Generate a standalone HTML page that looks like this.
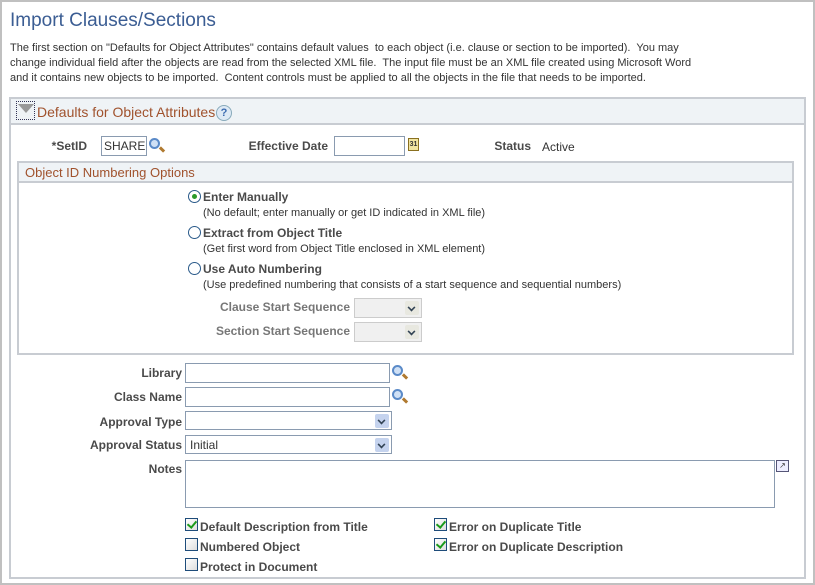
<!DOCTYPE html>
<html><head><style>
*{margin:0;padding:0;box-sizing:border-box}
body{width:815px;height:585px;overflow:hidden;background:#fff;font-family:"Liberation Sans",Arial,sans-serif;position:relative;color:#333}
.a{position:absolute;white-space:nowrap}
.lbl{font-size:12px;font-weight:bold;color:#4a4a4a;text-align:right}
.inp{position:absolute;border:1px solid #8a9bb0;background:#fff;height:20px;font-size:12px;padding:2px 4px;color:#333}
.sel .dd{position:absolute;right:2px;top:2px;width:14px;height:14px;background:#c5d3ee;border-radius:2px}
.sel .dd:after{content:"";position:absolute;left:3px;top:3px;width:5px;height:5px;border-right:2px solid #345;border-bottom:2px solid #345;transform:rotate(45deg) scale(.8)}
.cb{position:absolute;width:13px;height:13px;border:1px solid #1e4c7a;background:linear-gradient(135deg,#fff,#ddd)}
.cb.on:after{content:"";position:absolute;left:3px;top:0px;width:4px;height:7px;border-right:2px solid #1a9a1a;border-bottom:2px solid #1a9a1a;transform:rotate(40deg)}
.rd{position:absolute;width:13px;height:13px;border:1px solid #2a5a8a;border-radius:50%;background:#fff}
.rd.on:after{content:"";position:absolute;left:3px;top:3px;width:5px;height:5px;border-radius:50%;background:#2a9a2a}
.cbl{font-size:12px;font-weight:bold;color:#4a4a4a}
.mag{position:absolute;width:11px;height:11px;border:2px solid #5a8ac8;border-radius:50%;background:#cfe0f5}
.mag:after{content:"";position:absolute;left:8px;top:8px;width:6px;height:3px;background:#b07a30;transform:rotate(45deg)}
</style></head><body>
<div style="position:absolute;left:0;top:0;width:815px;height:585px;border:2px solid #c0c0c0;border-right-width:2px"></div>
<div class="a" style="left:10px;top:10px;font-size:19px;color:#3b5d93">Import Clauses/Sections</div>
<div class="a" style="left:10px;top:41px;font-size:11px;line-height:15px;color:#333">The first section on "Defaults for Object Attributes" contains default values&nbsp; to each object (i.e. clause or section to be imported).&nbsp; You may<br>change individual field after the objects are read from the selected XML file.&nbsp; The input file must be an XML file created using Microsoft Word<br>and it contains new objects to be imported.&nbsp; Content controls must be applied to all the objects in the file that needs to be imported.</div>

<div style="position:absolute;left:9px;top:97px;width:797px;height:482px;border:2px solid #c8ccd2;border-top:none"></div>
<div style="position:absolute;left:9px;top:97px;width:797px;height:28px;background:#eff3f6;border:2px solid #c8ccd2"></div>
<div style="position:absolute;left:16px;top:101px;width:19px;height:19px;border:1px dotted #335"></div>
<div style="position:absolute;left:18px;top:104px;width:0;height:0;border-left:8px solid transparent;border-right:8px solid transparent;border-top:9px solid #999"></div>
<div class="a" style="left:37px;top:104px;font-size:14px;color:#a0522d">Defaults for Object Attributes</div>
<div class="a" style="left:216px;top:105px;width:16px;height:16px;border-radius:50%;border:1px solid #8ab;background:#dde9f5;color:#3a6ab0;font-size:11px;font-weight:bold;text-align:center;line-height:14px">?</div>

<div class="a lbl" style="left:40px;top:139px;width:47px">*SetID</div>
<div class="inp" style="left:101px;top:136px;width:46px;padding:2px 2px">SHARE</div>
<div class="mag" style="left:149px;top:138px"></div>
<div class="a lbl" style="left:240px;top:139px;width:88px">Effective Date</div>
<div class="inp" style="left:334px;top:136px;width:71px"></div>
<div class="a" style="left:408px;top:138px;width:11px;height:13px;background:#f0e4a0;border:1px solid #8a7020;font-size:7px;font-weight:bold;text-align:center;line-height:12px">31</div>
<div class="a lbl" style="left:480px;top:139px;width:51px">Status</div>
<div class="a" style="left:542px;top:140px;font-size:12px;color:#333">Active</div>

<div style="position:absolute;left:17px;top:161px;width:777px;height:194px;border:2px solid #c8ccd2;border-top:none"></div>
<div style="position:absolute;left:17px;top:161px;width:777px;height:22px;background:#eff3f6;border:2px solid #c8ccd2"></div>
<div class="a" style="left:25px;top:165px;font-size:13px;color:#a0522d">Object ID Numbering Options</div>

<div class="rd on" style="left:188px;top:190px"></div>
<div class="a cbl" style="left:203px;top:190px;font-size:12px">Enter Manually</div>
<div class="a" style="left:203px;top:207px;font-size:11px;color:#333">(No default; enter manually or get ID indicated in XML file)</div>
<div class="rd" style="left:188px;top:226px"></div>
<div class="a cbl" style="left:203px;top:226px">Extract from Object Title</div>
<div class="a" style="left:203px;top:243px;font-size:11px;color:#333">(Get first word from Object Title enclosed in XML element)</div>
<div class="rd" style="left:188px;top:262px"></div>
<div class="a cbl" style="left:203px;top:262px">Use Auto Numbering</div>
<div class="a" style="left:203px;top:279px;font-size:11px;color:#333">(Use predefined numbering that consists of a start sequence and sequential numbers)</div>
<div class="a lbl" style="left:200px;top:300px;width:150px;color:#777">Clause Start Sequence</div>
<div class="inp sel" style="left:354px;top:298px;width:68px;background:#f0f0f0;border-color:#ccc"><div class="dd" style="background:#e8e8e0"></div></div>
<div class="a lbl" style="left:200px;top:324px;width:150px;color:#777">Section Start Sequence</div>
<div class="inp sel" style="left:354px;top:322px;width:68px;background:#f0f0f0;border-color:#ccc"><div class="dd" style="background:#e8e8e0"></div></div>

<div class="a lbl" style="left:60px;top:366px;width:122px">Library</div>
<div class="inp" style="left:185px;top:363px;width:205px"></div>
<div class="mag" style="left:392px;top:365px"></div>
<div class="a lbl" style="left:60px;top:390px;width:122px">Class Name</div>
<div class="inp" style="left:185px;top:387px;width:205px"></div>
<div class="mag" style="left:392px;top:389px"></div>
<div class="a lbl" style="left:60px;top:415px;width:122px">Approval Type</div>
<div class="inp sel" style="left:185px;top:411px;width:207px;height:19px"><div class="dd"></div></div>
<div class="a lbl" style="left:60px;top:438px;width:122px">Approval Status</div>
<div class="inp sel" style="left:185px;top:435px;width:207px;height:19px">Initial<div class="dd"></div></div>
<div class="a lbl" style="left:60px;top:462px;width:122px">Notes</div>
<div class="inp" style="left:185px;top:460px;width:590px;height:48px"></div>
<div class="a" style="left:776px;top:460px;width:13px;height:12px;border:1px solid #557;background:#eef;font-size:8px;line-height:10px;text-align:center">↗</div>

<div class="cb on" style="left:185px;top:518px"></div>
<div class="a cbl" style="left:200px;top:520px">Default Description from Title</div>
<div class="cb" style="left:185px;top:538px"></div>
<div class="a cbl" style="left:200px;top:540px">Numbered Object</div>
<div class="cb" style="left:185px;top:558px"></div>
<div class="a cbl" style="left:200px;top:560px">Protect in Document</div>
<div class="cb on" style="left:434px;top:518px"></div>
<div class="a cbl" style="left:449px;top:520px">Error on Duplicate Title</div>
<div class="cb on" style="left:434px;top:538px"></div>
<div class="a cbl" style="left:449px;top:540px">Error on Duplicate Description</div>
</body></html>
